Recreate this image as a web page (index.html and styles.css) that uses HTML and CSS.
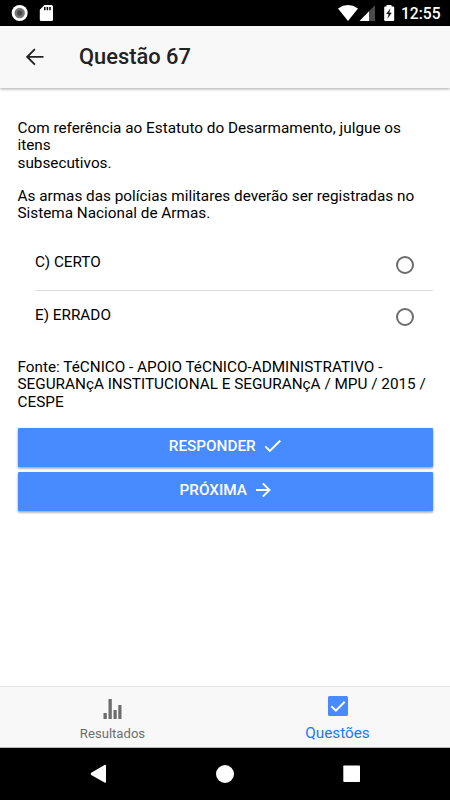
FILE: index.html
```html
<!DOCTYPE html>
<html lang="pt-BR">
<head>
<meta charset="utf-8">
<title>Questão 67</title>
<link rel="stylesheet" href="styles.css">
</head>
<body>
<div class="status">
  <svg width="60" height="26" viewBox="0 0 60 26"><circle cx="19.7" cy="13" r="8" fill="#fff"/><circle cx="19.7" cy="13" r="5.2" fill="#777"/><circle cx="19.7" cy="13" r="2.7" fill="#484848"/><path d="M44.500 5H51.500Q53 5 53 6.500V19.500Q53 21 51.500 21H41.300Q39.800 21 39.800 19.500V9.700Z" fill="#fff"/><path d="M44.800 7v3.200M47.400 7v3.200M50 7v3.200" stroke="#000" stroke-width="1.500"/></svg>
  <div class="status-right">
    <svg width="60" height="26" viewBox="336 0 60 26"><path d="M338 8.400Q348 1.600 358 8.400L348 21Z" fill="#fff"/><path d="M375 5.300V21H369V11.300Z" fill="#4b4b4b"/><path d="M369 11.300V21H359.500Z" fill="#fff"/><path d="M386.500 5h5v1.500h1.700q1 0 1 1V20q0 1-1 1h-8q-1 0-1-1V7.500q0-1 1-1h1.300Z" fill="#fff"/><path d="M390.500 8.200L386.200 14H388.700L387.300 19L391.800 12.700H389.300Z" fill="#111"/></svg>
    <span class="clock">12:55</span>
  </div>
</div>
<header class="header">
  <svg class="back" width="18" height="18" viewBox="0 0 18 18"><path d="M17.500 8.900H1.500M8.900 1.100L1.300 8.900L8.900 16.700" fill="none" stroke="#222" stroke-width="1.900"/></svg>
  <h1 class="title">Questão 67</h1>
</header>
<main class="content">
  <p class="text">Com referência ao Estatuto do Desarmamento, julgue os itens<br>subsecutivos.</p>
  <p class="text">As armas das polícias militares deverão ser registradas no Sistema Nacional de Armas.</p>
  <div class="list">
    <label class="item"><span>C) CERTO</span><i class="radio"></i></label>
    <label class="item"><span>E) ERRADO</span><i class="radio"></i></label>
  </div>
  <p class="source">Fonte: TéCNICO - APOIO TéCNICO-ADMINISTRATIVO - SEGURANçA INSTITUCIONAL E SEGURANçA / MPU / 2015 / CESPE</p>
  <button class="button">RESPONDER<svg width="18" height="16" viewBox="0 0 18 16"><path d="M1.300 8.300L5.900 12.900L16.300 2.500" fill="none" stroke="#fff" stroke-width="1.900"/></svg></button>
  <button class="button">PRÓXIMA<svg width="16" height="16" viewBox="0 0 16 16"><path d="M1 8H14M7.800 1.300L14.500 8L7.800 14.700" fill="none" stroke="#fff" stroke-width="1.900"/></svg></button>
</main>
<nav class="tabs">
  <div class="tab">
    <svg width="19" height="20" viewBox="0 0 19 20"><path d="M.5 14h3.300v6H.5ZM5.500 0h3.300v20H5.500ZM10.500 11h3.200v9h-3.200ZM15.300 6h3.200v14h-3.200Z" fill="#6d6d6d"/></svg>
    <span>Resultados</span>
  </div>
  <div class="tab active">
    <svg width="20" height="20" viewBox="0 0 20 20"><rect width="20" height="20" rx="1.500" fill="#488aff"/><path d="M3.400 10.200L7.900 14.700L16.700 5.700" fill="none" stroke="#fff" stroke-width="2"/></svg>
    <span>Questões</span>
  </div>
</nav>
<div class="navbar">
  <svg width="450" height="52" viewBox="0 0 450 52"><path d="M91.200 24.800L104.500 16.900Q106 16.200 106 17.800V33.800Q106 35.400 104.500 34.600L91.200 27Q90 26 91.200 24.800Z" fill="#fff"/><circle cx="225" cy="26" r="9" fill="#fff"/><rect x="343.300" y="17.400" width="16.700" height="16.700" rx=".8" fill="#fff"/></svg>
</div>
</body>
</html>
```
FILE: styles.css
```css
* { box-sizing: border-box; }
body {
  margin: 0;
  width: 450px;
  height: 800px;
  display: flex;
  flex-direction: column;
  overflow: hidden;
  background: #fff;
  color: #000;
  font: 15.3125px/17.5px Roboto, sans-serif;
}
svg { display: block; flex: none; }
.status {
  height: 26px;
  flex: none;
  display: flex;
  justify-content: space-between;
  background: #000;
  color: #fff;
}
.status-right { display: flex; padding-right: 10px; }
.clock { width: 39px; margin-left: 5px; font-size: 15.6px; font-weight: 500; line-height: 29px; }
.header {
  height: 61.5px;
  flex: none;
  display: flex;
  align-items: center;
  padding-left: 26px;
  background: #f8f8f8;
  box-shadow: 0 1px 3px rgba(0, 0, 0, .35);
}
.title { margin: 0 0 0 35px; padding-top: 1px; color: #222; font-size: 21.875px; line-height: 26px; font-weight: 500; }
.content { flex: 1; padding: 17px 17px 0 17.5px; }
.text { margin: 15.4px 0; }
.list { padding-left: 17.5px; margin-top: 13.2px; }
.item {
  height: 52.5px;
  display: flex;
  align-items: center;
  justify-content: space-between;
  padding: 0 19.5px 2px 0;
  border-bottom: 1px solid #dedede;
}
.item:last-child { border-bottom-color: transparent; }
.radio { width: 18px; height: 18px; margin-top: 4px; border: 2.5px solid #6d6d6d; border-radius: 50%; }
.source { margin: 15.8px 0 16.2px; }
.button {
  width: 100%;
  height: 39px;
  margin: 0 0 5px;
  padding: 0 0 1.5px;
  display: flex;
  align-items: center;
  justify-content: center;
  gap: 8px;
  border: 0;
  border-radius: 1px;
  background: #488aff;
  color: #fff;
  font: 500 15.3125px/18px Roboto, sans-serif;
  box-shadow: 0 2px 2px rgba(0, 0, 0, .14), 0 1px 3px rgba(0, 0, 0, .3);
}
.tabs {
  height: 62.5px;
  flex: none;
  display: flex;
  background: #f8f8f8;
  border-top: 1px solid #e5e5e5;
  border-bottom: 1px solid #bbb;
}
.tab {
  flex: 1;
  display: flex;
  flex-direction: column;
  align-items: center;
  padding-top: 12px;
  color: #6d6d6d;
  font-size: 13.125px;
  line-height: 18px;
}
.tab span { margin-top: 6px; }
.active { padding-top: 9.6px; color: #1c77ff; font-size: 15.3125px; }
.active span { margin-top: 8.2px; }
.navbar { height: 52px; flex: none; background: #000; }
```
